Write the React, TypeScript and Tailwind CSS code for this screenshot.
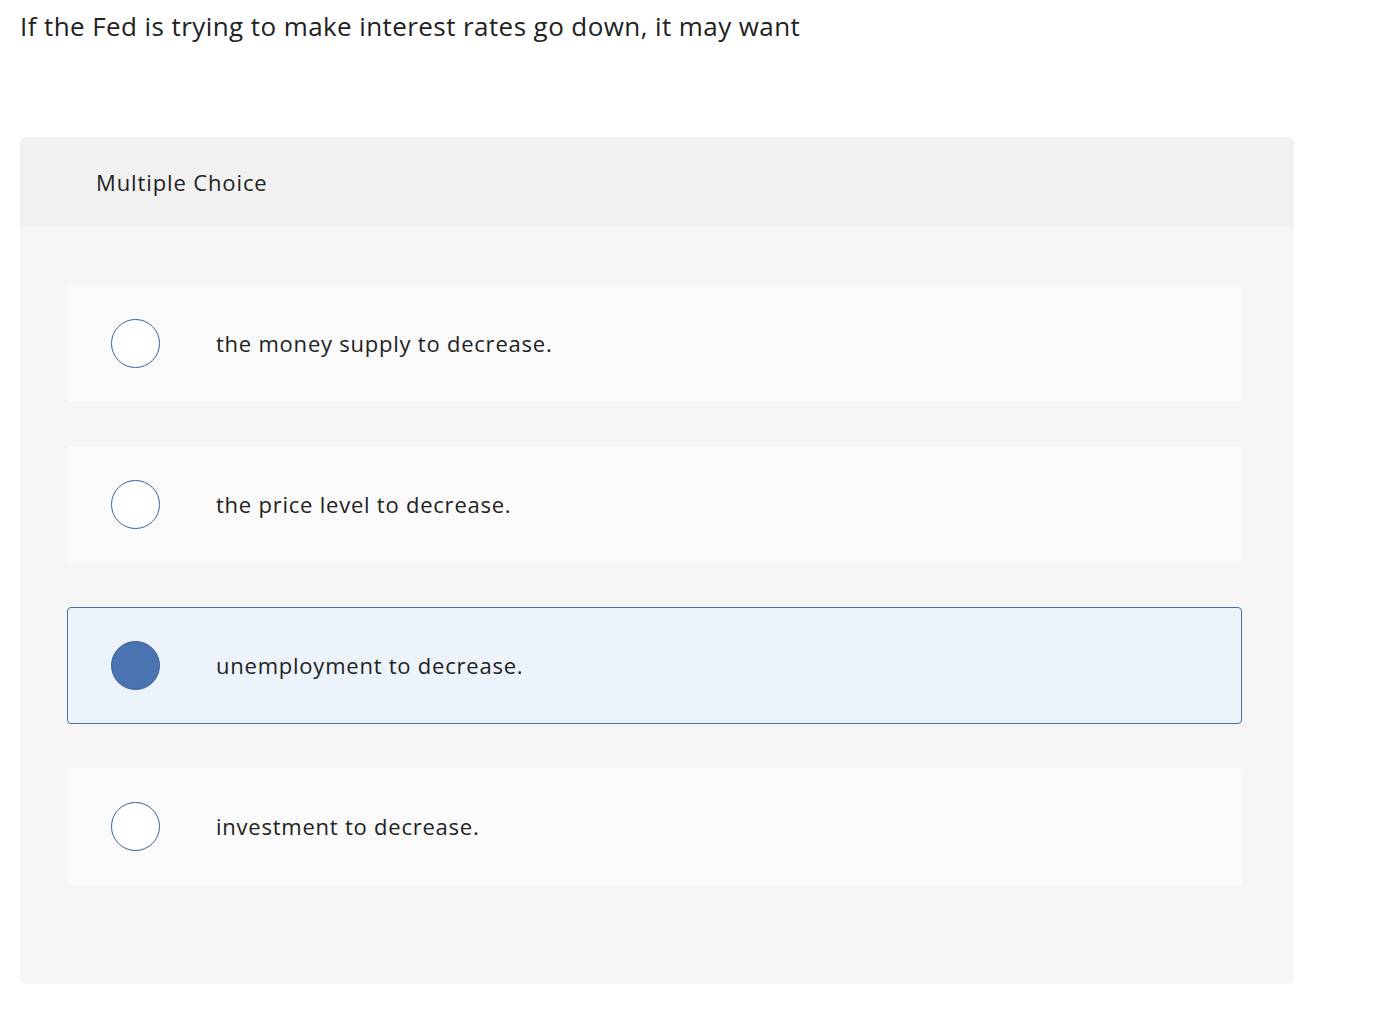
import React from "react";

const options = [
  "the money supply to decrease.",
  "the price level to decrease.",
  "unemployment to decrease.",
  "investment to decrease.",
];

export default function App() {
  const selected = 2;
  return (
    <div className="min-h-[1028px] bg-white pl-5 pt-[8px] text-[#222222]" style={{ fontFamily: "'Open Sans', Lato, sans-serif" }}>
      <h1 className="text-[26px] leading-[36px] font-normal tracking-[0.016em]">If the Fed is trying to make interest rates go down, it may want</h1>
      <div className="mt-[93px] w-[1274px] rounded-[6px] bg-[#f5f5f5] overflow-hidden">
        <div className="h-[90px] bg-[#f1f1f1] flex items-center pl-[76px]">
          <span className="text-[22px] tracking-[0.04em]">Multiple Choice</span>
        </div>
        <div className="pt-[58px] pb-[99px] pl-[47px] flex flex-col gap-[44px]">
          {options.map((o, i) => {
            const sel = i === selected;
            return (
              <div
                key={o}
                className={
                  sel
                    ? "w-[1175px] h-[117px] rounded-[4px] border border-[#4a6fa8] bg-[#edf3fb] flex items-center pl-[43px]"
                    : "w-[1175px] h-[117px] rounded-[4px] border border-transparent bg-[#fafafa] flex items-center pl-[43px]"
                }
              >
                <span
                  className={
                    sel
                      ? "w-[49px] h-[49px] rounded-full border border-[#3c5f99] bg-[#4a73b1] shrink-0"
                      : "w-[49px] h-[49px] rounded-full border border-[#3c5f99] bg-white shrink-0"
                  }
                />
                <span className="ml-[56px] text-[22px] tracking-[0.035em]">{o}</span>
              </div>
            );
          })}
        </div>
      </div>
    </div>
  );
}
